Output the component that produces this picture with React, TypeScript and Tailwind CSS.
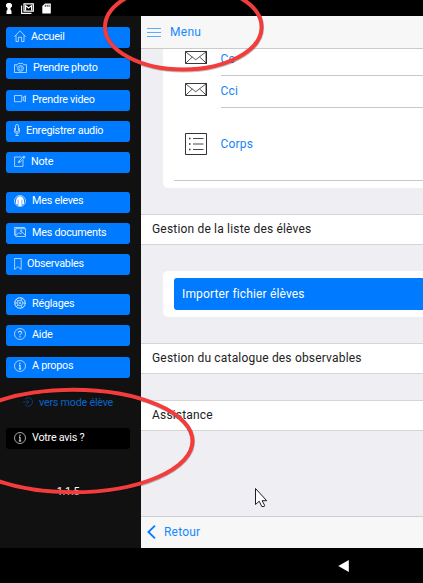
import React from "react";

type IconProps = { children: React.ReactNode; w?: number; h?: number; className?: string };

function Icon({ children, w = 12, h = 12, className = "" }: IconProps) {
  return (
    <svg
      width={w}
      height={h}
      viewBox={`0 0 ${w} ${h}`}
      fill="none"
      stroke="currentColor"
      strokeWidth="0.65"
      className={`mb-px shrink-0 ${className}`}
    >
      {children}
    </svg>
  );
}

const home = (
  <Icon>
    <path d="M.4 6.7 6 .8l5.6 5.9M2 5.2v6.3h2.4V7.3h3.2v4.2H10V5.2" />
  </Icon>
);
const camera = (
  <Icon w={13}>
    <path d="M.5 2.7h2.8l1-1.3h4.4l1 1.3h2.8v7.8H.5zM1.8 4.2h1" />
    <circle cx="6.5" cy="6.4" r="2.9" />
    <circle cx="6.5" cy="6.4" r="1.5" strokeWidth=".5" />
  </Icon>
);
const video = (
  <Icon>
    <path d="M.5 2.5h7.2v6.2H.5zM8.5 4.8l1.3-1v3.8l-1.3-1M9.8 3.8l1.7-1v5.8l-1.7-1" />
  </Icon>
);
const mic = (
  <Icon w={6}>
    <rect x="1.5" y=".5" width="3" height="7.5" rx="1.5" />
    <path d="M.4 4v3.2Q.6 9.4 3 9.4t2.6-2.2V4M3 9.4v2M1.3 11.5h3.4" />
  </Icon>
);
const note = (
  <Icon>
    <path d="M7.5 2H.6v9.4H9V5M4.3 7.8l.7-2L10 .9l1.2 1.2-5 5zM9 1.9l1.2 1.2M5 5.8l1.2 1.3" />
  </Icon>
);
const pupil = (
  <Icon>
    <circle cx="6" cy="6" r="5.5" />
    <path
      d="M3.2 9.7 2 8.7Q1.5 4 3.6 2.3 6 .4 8.4 2.3 10.5 4 10 8.7L8.8 9.7 7.8 8.6 7.7 11H4.3L4.2 8.6z"
      fill="currentColor"
      stroke="none"
    />
    <path d="M4.1 4.6v4M7.9 4.6v4" stroke="#007aff" strokeWidth=".6" />
  </Icon>
);
const images = (
  <Icon>
    <path d="M1.7 9H.4V1.5h10v1M1.8 2.7h9.7v7.8H1.8zM2 9.5l3-3 1.5 1.6 1.8-2 3 3.3" />
    <circle cx="7.2" cy="4.9" r=".8" />
  </Icon>
);
const bookmark = (
  <Icon w={8}>
    <path d="M.6.5h6.6v11L3.9 8.6.6 11.5z" />
  </Icon>
);
const gear = (
  <Icon>
    <circle cx="6" cy="6" r="5.1" />
    <circle cx="6" cy="6" r="5.5" strokeDasharray="1 .8" />
    <circle cx="6" cy="6" r="2.8" />
    <circle cx="6" cy="6" r=".9" />
    <path d="m4 4-1.7-1.6M8.8 6H11M4 8l-1.6 1.6M7 3.4 8 1.3M7 8.7l1 2M3.2 6H1" />
  </Icon>
);
const help = (
  <Icon>
    <circle cx="6" cy="6" r="5.5" />
    <path d="M4.3 4.7Q4.4 3.2 6 3.2t1.7 1.3Q7.7 5.4 6.6 6 6 6.4 6 7.2M6 8.1v1.2" strokeWidth="1" />
  </Icon>
);
const info = (
  <Icon>
    <circle cx="6" cy="6" r="5.5" />
    <path d="M6 2.7v1.2M5 5h1v3.8M4.8 9h2.4" strokeWidth="1" />
  </Icon>
);

function MenuButton({ icon, label, gap = "gap-[6px]", color = "bg-[#007aff]", mt = "mt-[10.4px]" }: {
  icon: React.ReactNode;
  label: string;
  gap?: string;
  color?: string;
  mt?: string;
}) {
  return (
    <button
      className={`flex h-[21px] w-[124px] shrink-0 items-center rounded-[3px] pb-[1.4px] pl-2 text-left text-white ${gap} ${color} ${mt}`}
    >
      {icon}
      <span className="whitespace-nowrap">{label}</span>
    </button>
  );
}

function Envelope() {
  return (
    <svg width="22" height="13" viewBox="0 0 22 13" fill="none" stroke="#222" strokeWidth=".9" className="shrink-0">
      <path d="M.5 .5h21v12H.5z" />
      <path d="m.5.7 10.2 8L21.3.7M.7 12.2l6.6-6.2M21.3 12.2l-6.6-6.2" strokeWidth=".75" />
      <path d="M21.2.5v12" strokeWidth="1.2" />
    </svg>
  );
}

function SectionRow({ label, mt }: { label: string; mt: string }) {
  return (
    <div className={`flex h-[31px] shrink-0 items-center border-y border-[#d5d5d8] bg-white pb-[2px] pl-[11px] text-[12px] tracking-[0.18px] text-[#222] ${mt}`}>
      {label}
    </div>
  );
}

export default function App() {
  return (
    <div className="relative flex h-[583px] w-[423px] flex-col overflow-hidden bg-black font-[Roboto,sans-serif]">
      <header className="flex h-4 shrink-0 items-start pl-1.5 pt-[2.5px] text-white">
        <svg width="6" height="11" viewBox="0 0 6 11" fill="currentColor">
          <path d="M1.5 0h3L6 1.5v2L4.5 5v1.5L5.5 8v3h-5V8l1-1.5V5L0 3.5v-2z" />
        </svg>
        <svg width="13" height="12" viewBox="0 0 13 12" fill="none" stroke="currentColor" className="ml-[9px]">
          <path d="M.6 2.5v7.9h9.9" strokeWidth="1.1" />
          <path d="M3 .8h9.3v7.4H3z" strokeWidth="1.2" />
          <path d="M4.6 7.5V2.6l3 2.3 3-2.3v4.9" strokeWidth="1.2" />
        </svg>
        <svg width="9" height="11" viewBox="0 0 9 11" className="ml-2">
          <path d="M3 .4h5.8v10.2H.3V3z" fill="currentColor" />
          <path d="M3.3 1.8v2M5.2 1.8v2M7.1 1.8v2" stroke="#000" strokeWidth=".8" />
        </svg>
      </header>

      <div className="flex h-[532px] shrink-0">
        <nav className="flex w-[141px] shrink-0 flex-col bg-[#111] pl-1.5 text-[10.8px] leading-[14px] tracking-[-0.25px]">
          <MenuButton icon={home} label="Accueil" gap="gap-[5px]" mt="mt-[11px]" />
          <MenuButton icon={camera} label="Prendre photo" />
          <MenuButton icon={video} label="Prendre video" />
          <MenuButton icon={mic} label="Enregistrer audio" />
          <MenuButton icon={note} label="Note" gap="gap-[5px]" mt="mt-[10px]" />
          <MenuButton icon={pupil} label="Mes eleves" mt="mt-[18.4px]" />
          <MenuButton icon={images} label="Mes documents" />
          <MenuButton icon={bookmark} label="Observables" gap="gap-[5px]" />
          <MenuButton icon={gear} label="Réglages" mt="mt-[18.4px]" />
          <MenuButton icon={help} label="Aide" />
          <MenuButton icon={info} label="A propos" />
          <button className="mt-[14.8px] flex h-[21px] items-center gap-[6px] pl-[17px] text-[#0864c8]">
            <Icon w={10} h={10} className="opacity-80">
              <path d="M2 2.4A4.2 4.2 0 1 1 2 7.6M0 5h5.8M4 3.2 5.8 5 4 6.8" />
            </Icon>
            <span>vers mode élève</span>
          </button>
          <MenuButton icon={info} label="Votre avis ?" color="bg-black" mt="mt-[15px]" />
          <div className="mt-[36px] w-[124px] text-center text-white">1.1.5</div>
        </nav>

        <main className="flex min-w-0 flex-1 flex-col bg-[#efeef3]">
          <div className="flex h-[33px] shrink-0 items-center border-b border-[#cbcbce] bg-[#f7f7f7] pl-1.5 text-[12px] tracking-[0.3px] text-[#158aff]">
            <svg width="14" height="10" viewBox="0 0 14 10" fill="#5eacf8">
              <path d="M0 1h14v1H0zM0 5h14v1H0zM0 9h14v1H0z" />
            </svg>
            <span className="ml-[9px]">Menu</span>
          </div>

          <section className="ml-[22px] flex h-[139px] shrink-0 flex-col rounded-bl-[5px] bg-white pl-[11px] text-[12px] tracking-[0.2px] text-[#1684f8]">
            <div className="flex h-[27px] pl-[11px]">
              <span className="mt-[2px]"><Envelope /></span>
              <span className="ml-[13.5px] flex-1 border-b border-[#c8c7cc] pt-[1px]">Cc</span>
            </div>
            <div className="flex h-8 pl-[11px]">
              <span className="mt-[7px]"><Envelope /></span>
              <span className="ml-[13.5px] flex-1 border-b border-[#c8c7cc] pt-[6px]">Cci</span>
            </div>
            <div className="flex h-[73px] items-center border-b border-[#c8c7cc] pl-[11px]">
              <svg width="22" height="22" viewBox="0 0 22 22" fill="none" stroke="#333">
                <path d="M.5.5h21v21H.5z" />
                <path d="M8 5.5h10.5M8 11h10.5M8 16.5h10.5" strokeWidth=".9" />
                <path d="M4 5.5h1.5M4 11h1.5M4 16.5h1.5" strokeWidth="1.5" />
              </svg>
              <span className="ml-[13.5px]">Corps</span>
            </div>
          </section>

          <SectionRow label="Gestion de la liste des élèves" mt="mt-[26px]" />
          <section className="ml-[22px] mt-[26px] h-[46px] shrink-0 rounded-l-[5px] bg-white pl-[11px] pt-[7px]">
            <button className="flex h-8 w-full items-center rounded-l-[3px] bg-[#007aff] pb-px pl-2 text-[12px] tracking-[0.15px] text-white">
              Importer fichier élèves
            </button>
          </section>
          <SectionRow label="Gestion du catalogue des observables" mt="mt-[26px]" />
          <SectionRow label="Assistance" mt="mt-[26px]" />

          <div className="mt-auto flex h-8 shrink-0 items-center border-t border-[#cfced3] bg-[#f7f7f7] pb-[2px] pl-[6px] text-[12px] tracking-[0.2px] text-[#158aff]">
            <svg width="9" height="14" viewBox="0 0 9 14" fill="none" stroke="#007aff" strokeWidth="1.8">
              <path d="M8 .7 1.4 7 8 13.3" />
            </svg>
            <span className="ml-2">Retour</span>
          </div>
        </main>
      </div>

      <footer className="flex flex-1 items-center pl-[338px]">
        <svg width="11" height="12" viewBox="0 0 11 12" fill="#fff">
          <path d="M.3 6 10.8 0v12z" />
        </svg>
      </footer>

      <svg width="423" height="583" viewBox="0 0 423 583" fill="none" className="pointer-events-none absolute inset-0">
        <g stroke="#000" strokeOpacity=".25" strokeWidth="4.2" transform="translate(.4 .8)">
          <ellipse cx="183.3" cy="27" rx="78.3" ry="42.5" />
          <ellipse cx="73" cy="441" rx="119.5" ry="51.3" />
        </g>
        <g stroke="#f33c3c" strokeWidth="4">
          <ellipse cx="183.3" cy="27" rx="78.3" ry="42.5" />
          <ellipse cx="73" cy="441" rx="119.5" ry="51.3" />
        </g>
        <path
          d="M255.5 488.5v16l3.7-3.3 2.6 5.3h2.4l.4-1.2-2.5-4.6h4.6z"
          fill="#fff"
          stroke="#1c1c2c"
        />
      </svg>
    </div>
  );
}
